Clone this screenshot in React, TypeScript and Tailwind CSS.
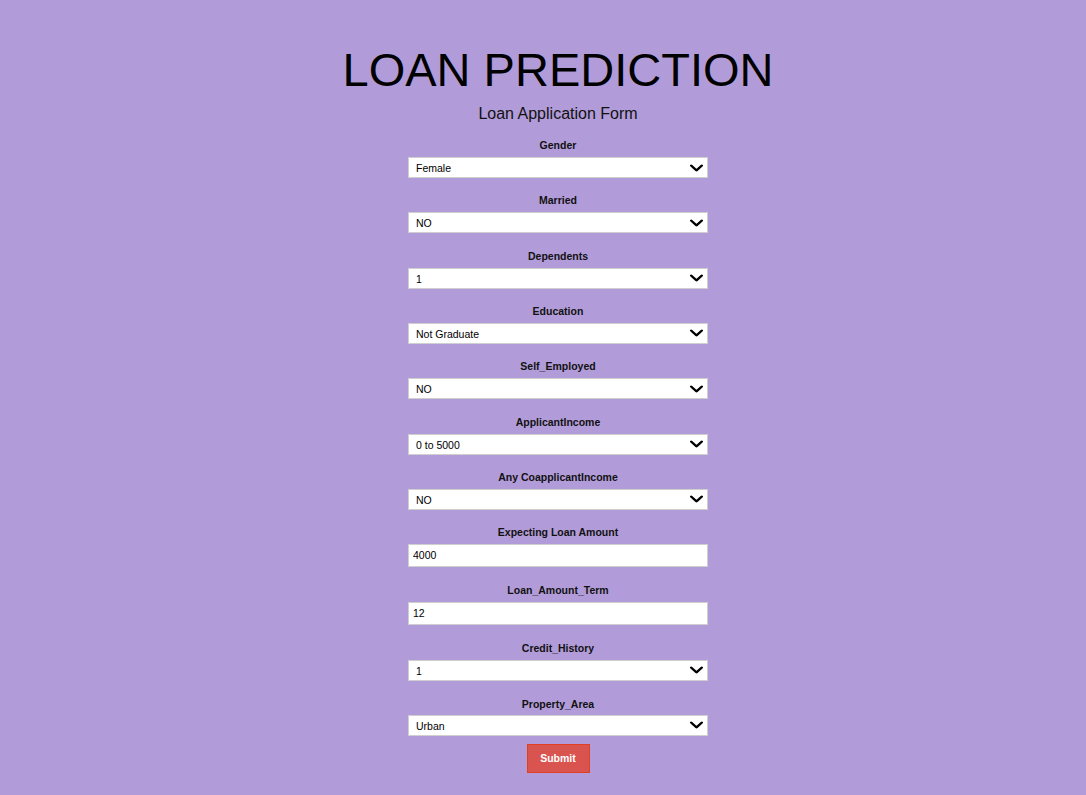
import React from "react";

const font = { fontFamily: '"Liberation Sans", Arial, sans-serif' };

function Chevron() {
  return (
    <svg
      className="pointer-events-none absolute right-[5px] top-1/2 -translate-y-1/2"
      width="13"
      height="7"
      viewBox="0 0 13 7"
      fill="none"
    >
      <polyline points="1.2,1 6.5,5.9 11.8,1" stroke="#000" strokeWidth="2.2" strokeLinecap="square" />
    </svg>
  );
}

function SelectField({ label, value, options, mb, lmb = "mb-[5px]" }: { label: string; value: string; options: string[]; mb: string; lmb?: string }) {
  return (
    <div className={`flex w-[300px] flex-col items-center ${mb}`}>
      <label className={`${lmb} block text-[10.5px] font-bold leading-[13px] text-[#111]`}>{label}</label>
      <div className="relative w-[300px]">
        <select
          defaultValue={value}
          className="block h-[21px] w-[300px] appearance-none border border-[#cfcfcf] bg-white pl-[7px] pt-[1px] text-[10.5px] leading-[18px] text-black outline-none"
          style={font}
        >
          {options.map((o) => (
            <option key={o} value={o}>
              {o}
            </option>
          ))}
        </select>
        <Chevron />
      </div>
    </div>
  );
}

function InputField({ label, value, mb }: { label: string; value: string; mb: string }) {
  return (
    <div className={`flex w-[300px] flex-col items-center ${mb}`}>
      <label className="mb-[5px] block text-[10.5px] font-bold leading-[13px] text-[#111]">{label}</label>
      <input
        defaultValue={value}
        className="block h-[23px] w-[300px] border border-[#cfcfcf] bg-white pl-[4px] text-[10.5px] text-black outline-none"
        style={font}
      />
    </div>
  );
}

export default function App() {
  return (
    <div className="flex min-h-[795px] flex-col items-center bg-[#b19cd9] pl-[30px] pt-[46px]" style={font}>
      <h1 className="text-[47px] font-normal leading-[47px] text-black">LOAN PREDICTION</h1>
      <h2 className="mt-[13px] text-[16px] font-normal leading-[16px] text-[#111]">Loan Application Form</h2>
      <form className="mt-[17px] flex flex-col items-center" onSubmit={(e) => e.preventDefault()}>
        <SelectField label="Gender" value="Female" options={["Male", "Female"]} mb="mb-[16.33px]" />
        <SelectField label="Married" value="NO" options={["YES", "NO"]} mb="mb-[16.33px]" />
        <SelectField label="Dependents" value="1" options={["0", "1", "2", "3+"]} mb="mb-[16.33px]" />
        <SelectField label="Education" value="Not Graduate" options={["Graduate", "Not Graduate"]} mb="mb-[16.33px]" />
        <SelectField label="Self_Employed" value="NO" options={["YES", "NO"]} mb="mb-[16.33px]" />
        <SelectField label="ApplicantIncome" value="0 to 5000" options={["0 to 5000", "5000 to 10000", "Above 10000"]} mb="mb-[16.33px]" />
        <SelectField label="Any CoapplicantIncome" value="NO" options={["YES", "NO"]} mb="mb-[16px]" />
        <InputField label="Expecting Loan Amount" value="4000" mb="mb-[17px]" />
        <InputField label="Loan_Amount_Term" value="12" mb="mb-[17px]" />
        <SelectField label="Credit_History" value="1" options={["0", "1"]} mb="mb-[17px]" />
        <SelectField label="Property_Area" value="Urban" options={["Urban", "Semiurban", "Rural"]} mb="mb-[8px]" lmb="mb-[4px]" />
        <button
          type="submit"
          className="h-[29px] w-[63px] border border-[#e0401f] bg-[#d9534f] text-[10.5px] font-bold text-white"
          style={font}
        >
          Submit
        </button>
      </form>
    </div>
  );
}
